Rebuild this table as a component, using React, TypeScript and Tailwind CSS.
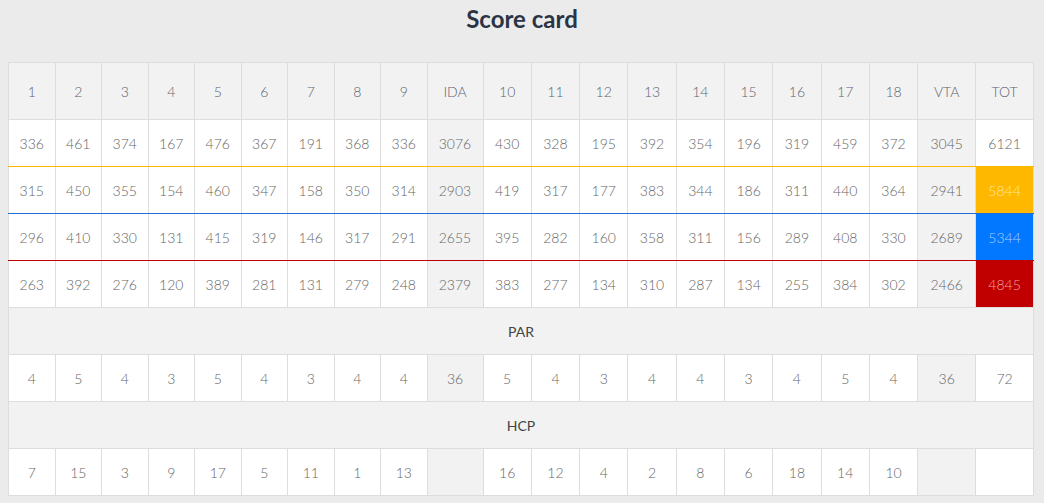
import React from 'react';

type Tee = {
  values: (number | string)[];
  line: string;
  totBg: string;
};

const holes = ['1', '2', '3', '4', '5', '6', '7', '8', '9', 'IDA', '10', '11', '12', '13', '14', '15', '16', '17', '18', 'VTA', 'TOT'];

const tees: Tee[] = [
  {
    values: [336, 461, 374, 167, 476, 367, 191, 368, 336, 3076, 430, 328, 195, 392, 354, 196, 319, 459, 372, 3045, 6121],
    line: 'border-b-[#ffb800]',
    totBg: '',
  },
  {
    values: [315, 450, 355, 154, 460, 347, 158, 350, 314, 2903, 419, 317, 177, 383, 344, 186, 311, 440, 364, 2941, 5844],
    line: 'border-b-[#1d6fd6]',
    totBg: 'bg-[#ffb800] text-[#ffe7a3]',
  },
  {
    values: [296, 410, 330, 131, 415, 319, 146, 317, 291, 2655, 395, 282, 160, 358, 311, 156, 289, 408, 330, 2689, 5344],
    line: 'border-b-[#c00000]',
    totBg: 'bg-[#0277ff] text-[#a8cfff]',
  },
  {
    values: [263, 392, 276, 120, 389, 281, 131, 279, 248, 2379, 383, 277, 134, 310, 287, 134, 255, 384, 302, 2466, 4845],
    line: '',
    totBg: 'bg-[#c00000] text-[#eea3a3]',
  },
];

const par = [4, 5, 4, 3, 5, 4, 3, 4, 4, 36, 5, 4, 3, 4, 4, 3, 4, 5, 4, 36, 72];
const hcp: (number | string)[] = [7, 15, 3, 9, 17, 5, 11, 1, 13, '', 16, 12, 4, 2, 8, 6, 18, 14, 10, '', ''];

// IDA and VTA columns are shaded
const isSum = (i: number) => i === 9 || i === 19;

const colWidths = [
  'w-[46.5px]', 'w-[46.5px]', 'w-[46.5px]', 'w-[46.5px]', 'w-[46.5px]', 'w-[46.5px]', 'w-[46.5px]', 'w-[46.5px]', 'w-[46.5px]',
  'w-[56px]',
  'w-[48.3px]', 'w-[48.3px]', 'w-[48.3px]', 'w-[48.3px]', 'w-[48.3px]', 'w-[48.3px]', 'w-[48.3px]', 'w-[48.3px]', 'w-[48.3px]',
  'w-[58px]',
  '',
];

const light = { fontFamily: '"Lato Light", Lato, "Noto Sans", sans-serif' };

function Cell({ i, children, tot = '', line = '' }: { i: number; children: React.ReactNode; tot?: string; line?: string }) {
  const bg = tot ? tot : isSum(i) ? 'bg-[#f2f2f2] text-[#666666]' : 'bg-white text-[#666666]';
  return (
    <td style={light} className={`border border-[#dddddd] h-[47px] p-0 text-center text-[14px] font-light ${bg} ${line}`}>
      {children}
    </td>
  );
}

export default function App() {
  return (
    <div className="min-h-screen bg-[#ebebeb] px-2 pb-2" style={{ fontFamily: 'Lato, "Noto Sans", sans-serif' }}>
      <h1 className="pt-px text-center text-[24px] leading-[36px] font-bold text-[#2b3444]">Score card</h1>
      <table className="mt-[25px] w-[1026px] table-fixed border-collapse border border-[#dddddd]">
        <colgroup>
          {colWidths.map((w, i) => (
            <col key={i} className={w} />
          ))}
        </colgroup>
        <thead>
          <tr className="bg-[#f2f2f2]">
            {holes.map((h) => (
              <th key={h} style={light} className="h-[57px] border border-[#dddddd] p-0 text-center text-[14px] font-light text-[#5a6374]">
                {h}
              </th>
            ))}
          </tr>
        </thead>
        <tbody>
          {tees.map((tee, r) => (
            <tr key={r}>
              {tee.values.map((v, i) => (
                <Cell key={i} i={i} line={tee.line} tot={i === 20 ? tee.totBg : ''}>
                  {v}
                </Cell>
              ))}
            </tr>
          ))}
          <tr>
            <td colSpan={21} className="h-[47px] border border-[#dddddd] bg-[#f2f2f2] text-center text-[14px] text-[#444444]">
              PAR
            </td>
          </tr>
          <tr>
            {par.map((v, i) => (
              <Cell key={i} i={i}>{v}</Cell>
            ))}
          </tr>
          <tr>
            <td colSpan={21} className="h-[47px] border border-[#dddddd] bg-[#f2f2f2] text-center text-[14px] text-[#444444]">
              HCP
            </td>
          </tr>
          <tr>
            {hcp.map((v, i) => (
              <Cell key={i} i={i}>{v}</Cell>
            ))}
          </tr>
        </tbody>
      </table>
    </div>
  );
}
